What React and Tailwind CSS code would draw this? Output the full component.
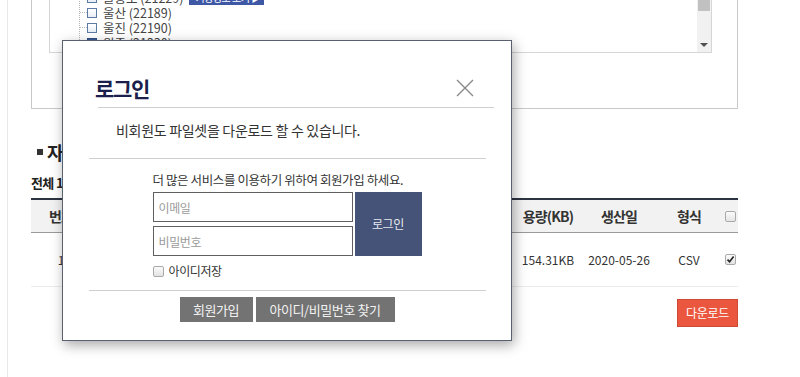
import React from "react";

function Box({ checked }) {
  return (
    <div className="w-[11px] h-[11px] rounded-[2px] border border-[#a9a9a9] bg-gradient-to-b from-[#fbfbfb] to-[#e4e4e4] flex items-center justify-center">
      {checked && (
        <svg width="9" height="9" viewBox="0 0 9 9">
          <path d="M1.5 4.6 L3.6 6.8 L7.6 1.6" fill="none" stroke="#222" strokeWidth="1.6" />
        </svg>
      )}
    </div>
  );
}

function TreeRow({ label, extra, dark }) {
  return (
    <div className="flex items-center h-[15px]">
      <div className="w-[7px] border-t border-dotted border-[#b5b5b5]" />
      <div
        className={
          "w-[10px] h-[10px] border " +
          (dark ? "border-[#2f4f86] bg-[#3a5a96]" : "border-[#5d7aa3] bg-gradient-to-b from-white to-[#e8eef6]")
        }
      />
      <span className="ml-[6px] text-[12.5px] leading-[15px] text-[#444] whitespace-nowrap">{label}</span>
      {extra && (
        <span className="ml-[6px] h-[14px] w-[75px] bg-[#3e58a6] text-white text-[10px] leading-[14px] px-[6px] whitespace-nowrap tracking-[-0.5px]">
          기상정보 보기 ▶
        </span>
      )}
    </div>
  );
}

export default function App() {
  return (
    <div className="relative w-[800px] h-[377px] overflow-hidden bg-white text-[#333] font-['Noto_Sans_CJK_KR','Noto_Sans',sans-serif]">
      <div className="ml-[7px] h-full border-l border-[#e8e8e8] pl-[23px] flex flex-col items-start">
        {/* outer box */}
        <div className="-mt-[20px] w-[707px] h-[129px] shrink-0 border border-[#c9c9c9] pl-[17px]">
          <div className="w-[663px] h-[72px] border border-[#d6d6d6] flex">
            <div className="flex-1 overflow-hidden">
              <div className="ml-[29px] mt-[8px] border-l border-dotted border-[#b5b5b5]">
                <TreeRow label="울릉도 (21229)" extra />
                <TreeRow label="울산 (22189)" />
                <TreeRow label="울진 (22190)" />
                <TreeRow label="원주 (21230)" dark />
              </div>
            </div>
            <div className="w-[14px] bg-[#f1f1f1] flex flex-col justify-between">
              <div className="h-[29px] bg-[#c1c1c1] mx-[1px]" />
              <div className="h-[14px] flex items-center justify-center">
                <div className="w-0 h-0 border-l-[4px] border-r-[4px] border-t-[4px] border-l-transparent border-r-transparent border-t-[#505050]" />
              </div>
            </div>
          </div>
        </div>

        {/* heading */}
        <div className="mt-[31px] flex items-center h-[24px] pl-[6px]">
          <div className="w-[6px] h-[6px] bg-[#333]" />
          <span className="ml-[4px] text-[18px] font-bold tracking-[-1px] text-[#222]">자료 목록</span>
        </div>
        <div className="mt-[10px] h-[18px] text-[13px] leading-[18px] font-bold tracking-[-0.6px] text-[#222]">
          전체 1건
        </div>

        {/* table */}
        <div className="mt-[6px] w-[707px]">
          <div className="border-t-2 border-[#2c3442] bg-[#f2f2f2] h-[35px] border-b border-b-[#9a9a9a] flex items-center text-[14px] font-bold tracking-[-0.8px] text-[#333]">
            <div className="w-[60px] text-center">번호</div>
            <div className="flex-1 text-center">파일명</div>
            <div className="w-[70px] text-center">용량(KB)</div>
            <div className="w-[72px] text-center">생산일</div>
            <div className="w-[68px] text-center">형식</div>
            <div className="w-[15px] flex justify-center">
              <Box />
            </div>
          </div>
          <div className="h-[54px] border-b border-[#ececec] flex items-center text-[12px] text-[#333]">
            <div className="w-[60px] text-center">1</div>
            <div className="flex-1 text-center">파일셋</div>
            <div className="w-[70px] text-center">154.31KB</div>
            <div className="w-[72px] text-center">2020-05-26</div>
            <div className="w-[68px] text-center">CSV</div>
            <div className="w-[15px] flex justify-center">
              <Box checked />
            </div>
          </div>
          <div className="mt-[12px] flex justify-end">
            <button className="w-[61px] h-[28px] bg-[#ea573e] border border-[#cf4a34] text-white text-[12px] tracking-[-0.3px]">
              다운로드
            </button>
          </div>
        </div>
      </div>

      {/* modal */}
      <div className="absolute left-[62px] top-[40px] w-[450px] h-[301px] border border-[#59606f] bg-white shadow-[2px_4px_12px_rgba(0,0,0,0.35)]">
        <div className="flex items-center justify-between pl-[32px] pr-[37px] pt-[33px] h-[61px]">
          <span className="text-[21px] leading-[28px] font-bold tracking-[-1.3px] text-[#1b1f4b]">로그인</span>
          <svg width="18" height="18" viewBox="0 0 18 18" className="mt-[-1px]">
            <path d="M1 1 L17 17 M17 1 L1 17" stroke="#8a8a8a" strokeWidth="1.4" />
          </svg>
        </div>
        <div className="mt-[5px] ml-[35px] w-[396px] h-px bg-[#cfcfcf]" />
        <div className="mt-[12px] pl-[53px] text-[14px] leading-[20px] tracking-[-0.3px] text-[#333] whitespace-nowrap">
          비회원도 파일셋을 다운로드 할 수 있습니다.
        </div>
        <div className="mt-[18px] ml-[26px] w-[397px] h-px bg-[#cfcfcf]" />
        <div className="w-[269px] mx-auto">
          <div className="mt-[12px] text-[12.5px] leading-[18px] tracking-[-0.4px] text-[#333] whitespace-nowrap">
            더 많은 서비스를 이용하기 위하여 회원가입 하세요.
          </div>
          <div className="mt-[3px] flex gap-[2px]">
            <div className="flex flex-col gap-[4px]">
              <input
                placeholder="이메일"
                className="w-[200px] h-[30px] border border-[#5f5f5f] px-[5px] text-[12px] tracking-[-0.4px] placeholder:text-[#9a9a9a] outline-none"
              />
              <input
                placeholder="비밀번호"
                className="w-[200px] h-[30px] border border-[#5f5f5f] px-[5px] text-[12px] tracking-[-0.4px] placeholder:text-[#9a9a9a] outline-none"
              />
            </div>
            <button className="w-[67px] h-[64px] bg-[#465378] text-[#e6e9f1] text-[12px] tracking-[-0.3px]">
              로그인
            </button>
          </div>
          <div className="mt-[7px] h-[16px] flex items-center">
            <div className="w-[11px] h-[11px] rounded-[2px] border border-[#a9a9a9] bg-gradient-to-b from-[#fbfbfb] to-[#e4e4e4]" />
            <span className="ml-[5px] text-[12px] tracking-[-0.4px] text-[#333]">아이디저장</span>
          </div>
        </div>
        <div className="mt-[11px] ml-[26px] w-[397px] h-px bg-[#cfcfcf]" />
        <div className="mt-[6px] flex justify-center gap-[3px]">
          <button className="w-[73px] h-[25px] bg-[#737373] text-[#f2f2f2] text-[13px] tracking-[-0.4px]">
            회원가입
          </button>
          <button className="w-[139px] h-[25px] bg-[#737373] text-[#f2f2f2] text-[13px] tracking-[-0.4px]">
            아이디/비밀번호 찾기
          </button>
        </div>
      </div>
    </div>
  );
}
